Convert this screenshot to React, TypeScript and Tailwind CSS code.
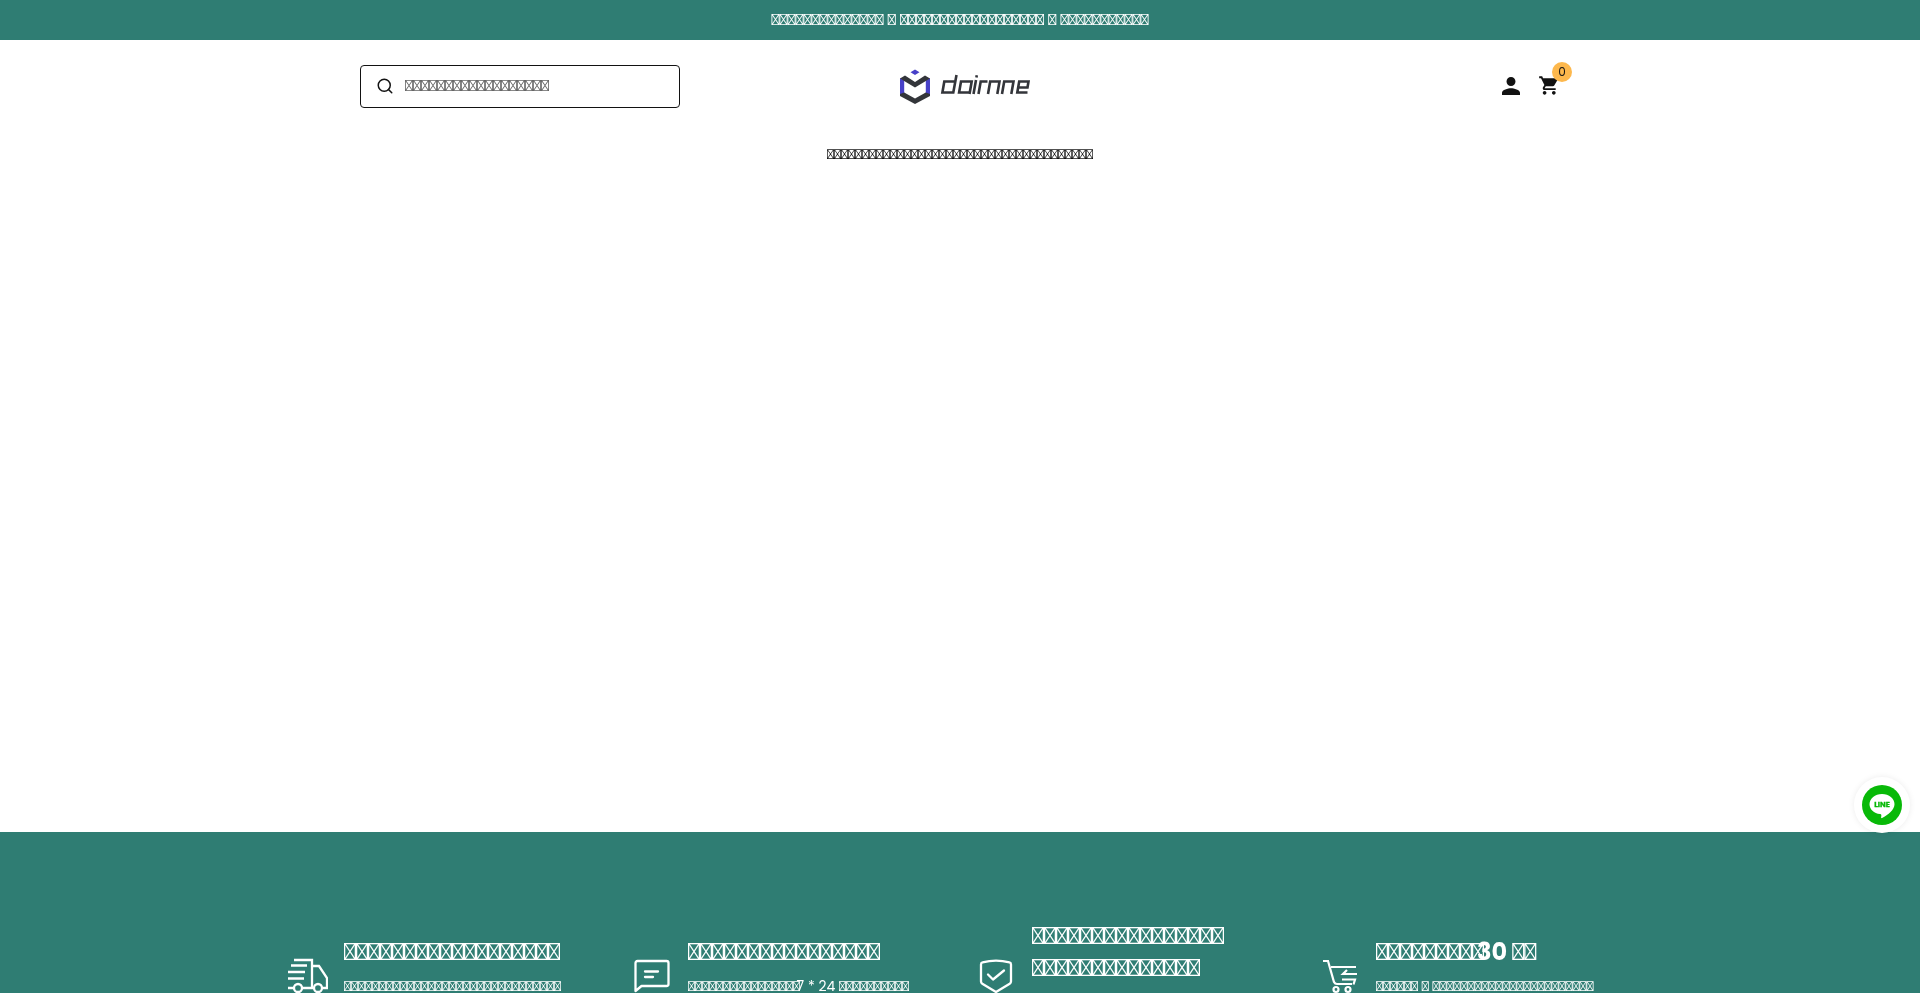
import type { ReactNode } from 'react';
import { Search } from 'lucide-react';
import { IoMdCart, IoMdPerson } from 'react-icons/io';

// glyph that no installed font covers, shown as the font's own .notdef box
const box = (count: number) => '\uE123'.repeat(count);

interface Feature {
  icon: ReactNode;
  title: ReactNode;
  text: ReactNode;
}

function TruckIcon() {
  return (
    <svg width="40" height="40" viewBox="0 0 40 40" fill="none" stroke="currentColor" strokeWidth="2.3">
      <path d="M6 4h18v27" />
      <path d="M3 9.5h16M0 16h17M0 22.5h16" />
      <path d="M24 10h7l8 12v10h-4" />
      <path d="M0 32h6M14 32h11" />
      <circle cx="10" cy="32" r="4" />
      <circle cx="30" cy="32" r="4" />
    </svg>
  );
}

function ChatIcon() {
  return (
    <svg width="40" height="40" viewBox="0 0 40 40" fill="none" stroke="currentColor" strokeWidth="2.3" strokeLinecap="round" strokeLinejoin="round">
      <path d="M5.5 5h29a2 2 0 0 1 2 2v21a2 2 0 0 1-2 2H9.500l-6 5V7a2 2 0 0 1 2-2z" />
      <path d="M13 15.5h13M13 21h8" />
    </svg>
  );
}

function ShieldIcon() {
  return (
    <svg width="40" height="40" viewBox="0 0 40 40" fill="none" stroke="currentColor" strokeWidth="2.3" strokeLinecap="round" strokeLinejoin="round">
      <path d="M5 8.5c0-1 .5-2 1.5-2.2 9-2.2 18-2.2 27 0 1 .2 1.5 1.2 1.5 2.2v17c0 1-.5 1.7-1.3 2.2L20 36 6.3 27.7C5.5 27.2 5 26.5 5 25.5z" />
      <path d="M12 18.5l5 5 11-9" />
    </svg>
  );
}

function TrolleyIcon() {
  return (
    <svg width="40" height="40" viewBox="0 0 40 40" fill="none" stroke="currentColor" strokeWidth="2.2">
      <path d="M3 5h5l6 21q1 2 3 2h15" />
      <path d="M11 11h25M37 18H23l4-4M22 23.5h13l-1.5 5" />
      <circle cx="16" cy="33.5" r="2.5" />
      <circle cx="28" cy="33.5" r="2.5" />
    </svg>
  );
}

function Logo() {
  return (
    <svg width="130" height="36" viewBox="0 0 130 36" fill="none">
      <path d="M15 1.5l4.5 2.7L15 7l-4.500-2.800z" fill="#4740c8" />
      <path d="M0 10l4.200 2.500V28L0 26zM30 10l-4.200 2.500V28l4.200-2z" fill="#4740c8" />
      <path d="M0 10.5L5 7.5l10 6.5 10-6.5 5 3L15 19.5zM0 26l4.200-1.500L15 30.5l10.800-6L30 26v2l-15 8-15-8z" fill="#33353a" />
      <g stroke="#33353a" strokeWidth="2.6">
        <path d="M56.500 7l-3.200 17.500H42.400l1.900-11h11" />
        <path d="M69.500 26l2.200-12.500H61l-1.900 11h11" />
        <path d="M76 12l-2.500 14M76.400 9.500l.4-2.200M78.500 26l2.200-12.500h6.800" />
        <path d="M88 26l2.200-12.500h9.300L97.300 26M102 26l2.200-12.500h9.300L111.300 26" />
        <path d="M118 19.500h9.500l1-6h-9.300l-1.900 11h10.200" />
      </g>
    </svg>
  );
}

function LineIcon() {
  return (
    <svg width="40" height="40" viewBox="0 0 40 40">
      <circle cx="20" cy="20" r="20" fill="#08b908" />
      <path d="M20 9c-7 0-12.5 4.600-12.5 10.200 0 5 4.500 9.200 10.500 9.900 1.800.3 1.400 1.300 1.100 3.300 0 .8.4.9 1 .6 6-3.200 12.400-8.200 12.400-13.800C32.500 13.600 27 9 20 9z" fill="#fff" />
      <text x="20" y="22.3" textAnchor="middle" fontSize="7.6" fontWeight="700" fill="#08b908" stroke="#08b908" strokeWidth=".3">
        LINE
      </text>
    </svg>
  );
}

const features: Feature[] = [
  { icon: <TruckIcon />, title: box(18), text: box(31) },
  {
    icon: <ChatIcon />,
    title: box(16),
    text: (
      <>
        {box(16)}
        <span className="-ml-[3.5px]">7 * 24 </span>
        {box(10)}
      </>
    ),
  },
  {
    icon: <ShieldIcon />,
    title: (
      <>
        {box(16)} <br />
        {box(14)}
      </>
    ),
    text: box(20),
  },
  {
    icon: <TrolleyIcon />,
    title: (
      <>
        {box(9)}
        <span className="-ml-[7px]">30 </span>
        {box(2)}
      </>
    ),
    text: `${box(6)} ${box(1)} ${box(23)}`,
  },
];

export default function App() {
  return (
    <div className="flex h-screen flex-col overflow-hidden font-['Poppins',sans-serif] text-[#121212] antialiased will-change-transform">
      <div className="flex h-10 shrink-0 items-center justify-center bg-[#2f7d73] text-base whitespace-pre text-white">
        {`${box(14)} ${box(1)} ${box(18)} ${box(1)} ${box(11)}`}
      </div>

      <header className="mx-auto grid h-[92px] w-[1200px] shrink-0 grid-cols-3 items-center">
        <label className="flex h-[43px] w-80 items-center gap-[11px] rounded border border-[#121212] pl-[15px]">
          <Search size={18} strokeWidth={2} />
          <input className="w-60 outline-none placeholder:text-[#666]" placeholder={box(18)} />
        </label>
        <div className="flex justify-center pl-[10px]">
          <Logo />
        </div>
        <div className="flex items-center justify-end gap-[14px]">
          <IoMdPerson size={24} className="-mt-px" />
          <div className="relative">
            <IoMdCart size={23} className="-mt-px" />
            <span className="absolute -top-[13px] -right-[12px] flex size-5 items-center justify-center rounded-full bg-[#fdb84d] text-xs">
              0
            </span>
          </div>
        </div>
      </header>

      <nav className="flex h-[44px] shrink-0 items-center justify-center text-sm">{box(38)}</nav>

      <main className="h-[656px] shrink-0" />

      <footer className="h-[300px] shrink-0 bg-[#2f7d73] pt-[88px] text-white">
        <div className="mx-auto grid h-28 w-[1376px] grid-cols-4">
          {features.map((feature, index) => (
            <div key={index} className="flex items-center gap-4 px-4">
              <div className="size-10 shrink-0">{feature.icon}</div>
              <div className="flex h-full flex-col justify-center whitespace-nowrap">
                <h3 className="text-2xl leading-8 font-bold">{feature.title}</h3>
                <p className="mt-2 mb-5 text-sm leading-5">{feature.text}</p>
              </div>
            </div>
          ))}
        </div>
      </footer>

      <a className="fixed top-[777px] right-[10px] flex size-14 items-center justify-center rounded-full bg-white shadow-[0_0_6px_rgba(0,0,0,0.08)]">
        <LineIcon />
      </a>
    </div>
  );
}
